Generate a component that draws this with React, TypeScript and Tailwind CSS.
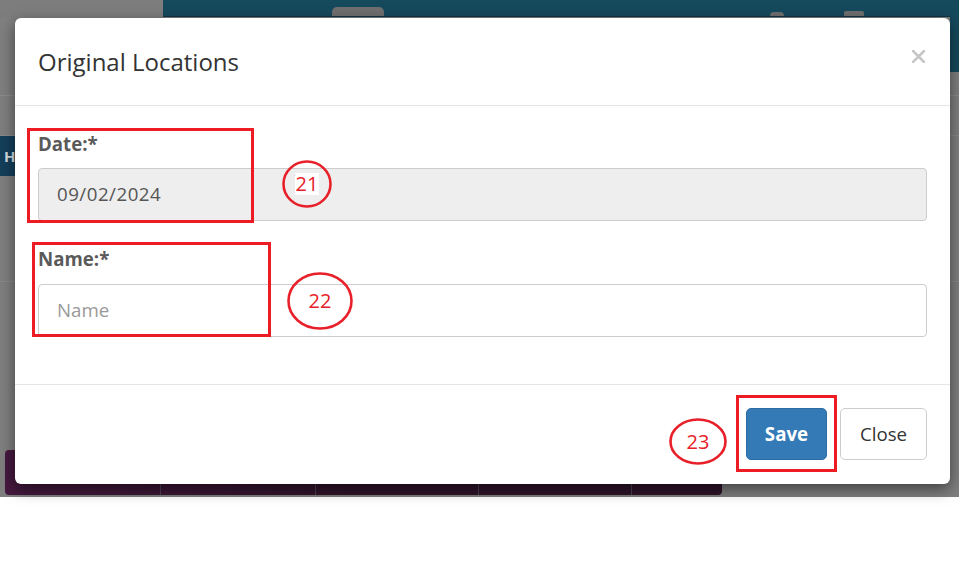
import React from "react";

function Ellipse({ left, top, w, h, label }: { left: number; top: number; w: number; h: number; label: string }) {
  return (
    <div className="absolute" style={{ left, top, width: w, height: h }}>
      <svg width={w} height={h} className="absolute inset-0">
        <ellipse cx={w / 2} cy={h / 2} rx={w / 2 - 1.5} ry={h / 2 - 1.5} fill="none" stroke="#e8202a" strokeWidth="2.6" />
      </svg>
      <div className="absolute inset-0 flex items-center justify-center">
        <span className="bg-white text-[20px] leading-[22px] text-[#e8202a] font-['Open_Sans',sans-serif] px-[1px]">{label}</span>
      </div>
    </div>
  );
}

export default function App() {
  return (
    <div className="relative w-[959px] h-[580px] bg-white overflow-hidden font-['Open_Sans',sans-serif]">
      {/* dimmed page behind the modal */}
      <div className="h-[497px] bg-[#7f7f7f] flex flex-col">
        <div className="flex items-start h-[72px]">
          <div className="w-[163px] h-[17px] bg-[#7d7d7d]" />
          <div className="flex-1 h-[17px] bg-[#15495c] border-b border-[#0d3747] flex items-end">
            <div className="ml-[169px] w-[52px] h-[9px] rounded-t-[5px] bg-[#6f6f6f]" />
            <div className="ml-[386px] w-[14px] h-[4px] rounded-t-full bg-[#6f6f6f]" />
            <div className="ml-[60px] w-[20px] h-[5px] rounded-t-[2px] bg-[#6f6f6f]" />
          </div>
          <div className="w-[9px] h-[72px] bg-[#15495c]" />
        </div>
        <div className="mt-[23px] border-t border-[#8c8c8c]" />
        <div className="mt-[39px] border-t border-[#8a8a8a]" />
        <div className="h-[40px] w-[15px] bg-[#143f5a] flex items-center text-[#d6dde3] font-bold text-[15px] pl-[4px] overflow-hidden">
          H
        </div>
        <div className="mt-[105px] border-t border-[#8a8a8a]" />
        <div className="mt-[168px] ml-[5px] w-[717px] h-[45px] rounded-[4px] bg-gradient-to-r from-[#45193f] via-[#2f1329] to-[#2f1329] flex">
          <div className="w-[155px]" />
          <div className="w-[155px] border-l border-[#4d4050]" />
          <div className="w-[163px] border-l border-[#4d4050]" />
          <div className="w-[153px] border-l border-[#4d4050]" />
          <div className="flex-1 border-l border-[#4d4050]" />
        </div>
      </div>

      {/* modal */}
      <div className="absolute left-[15px] top-[18px] w-[935px] h-[466px] rounded-[6px] bg-white shadow-[0_5px_15px_rgba(0,0,0,0.5)] flex flex-col">
        <div className="h-[88px] border-b border-[#e5e5e5] flex items-start justify-between pl-[23px] pr-[25px]">
          <div className="h-[87px] flex items-center">
            <h4 className="text-[24px] leading-[30px] text-[#333333] font-normal">Original Locations</h4>
          </div>
          <svg width="13" height="13" viewBox="0 0 13 13" className="mt-[32px]">
            <path d="M1 1 L12 12 M12 1 L1 12" stroke="#c6c6c6" strokeWidth="2.6" strokeLinecap="square" />
          </svg>
        </div>

        <div className="px-[23px] pt-[25px] pb-[47px]">
          <div>
            <label className="block text-[18.7px] leading-[26px] font-bold text-[#5a5a5a] mb-[11px]">Date:*</label>
            <div className="h-[53px] rounded-[4px] border border-[#cccccc] bg-[#eeeeee] px-[18px] flex items-center text-[18.7px] tracking-[0.5px] text-[#555555]">
              09/02/2024
            </div>
          </div>
          <div className="mt-[25px]">
            <label className="block text-[18.7px] leading-[26px] font-bold text-[#5a5a5a] mb-[12px]">Name:*</label>
            <div className="h-[53px] rounded-[4px] border border-[#cccccc] bg-white px-[18px] flex items-center text-[18.7px] text-[#999999]">
              Name
            </div>
          </div>
        </div>

        <div className="border-t border-[#e5e5e5] pt-[23px] pr-[23px] flex justify-end gap-[13px]">
          <button className="w-[81px] h-[52px] rounded-[5px] bg-[#337ab7] border border-[#2e6da4] text-white font-bold text-[18.7px]">
            Save
          </button>
          <button className="w-[87px] h-[52px] rounded-[5px] bg-white border border-[#cccccc] text-[#333333] text-[18.7px]">
            Close
          </button>
        </div>
      </div>

      {/* red annotations */}
      <div className="absolute left-[27px] top-[128px] w-[227px] h-[95px] border-[3px] border-[#ed1c24]" />
      <div className="absolute left-[32px] top-[242px] w-[239px] h-[95px] border-[3px] border-[#ed1c24]" />
      <div className="absolute left-[736px] top-[395px] w-[101px] h-[77px] border-[3px] border-[#ed1c24]" />
      <Ellipse left={282} top={160} w={50} h={48} label="21" />
      <Ellipse left={287} top={272} w={66} h={58} label="22" />
      <Ellipse left={669} top={418} w={58} h={47} label="23" />
    </div>
  );
}
